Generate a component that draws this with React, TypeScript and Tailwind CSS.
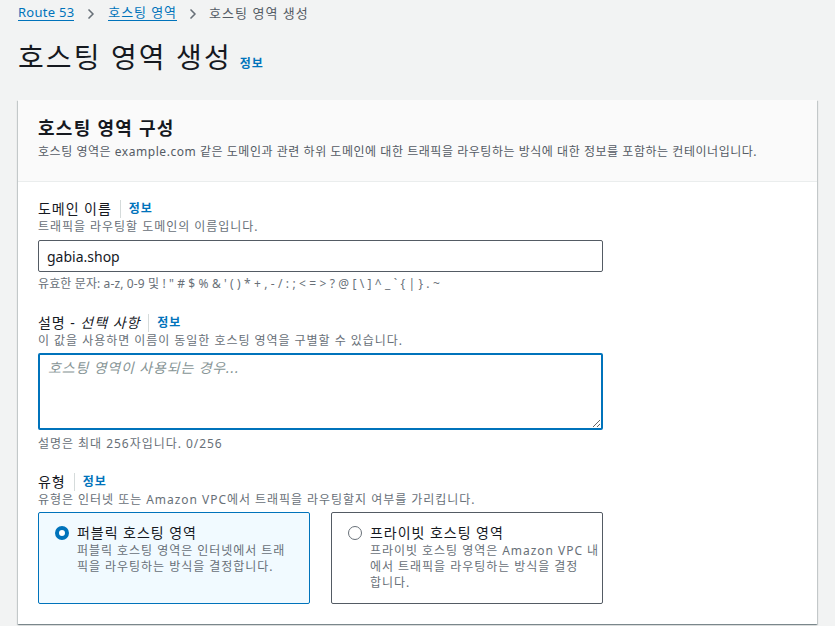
import { ChevronRight } from 'lucide-react';

const font = { fontFamily: '"Noto Sans", "Noto Sans CJK KR", sans-serif' };

function Info() {
    return <a className="text-[12px] font-bold text-[#0073bb] leading-none">정보</a>;
}

function Label({ children }: { children: React.ReactNode }) {
    return (
        <div className="flex items-center h-[18px]">
            <span className="text-[14px] text-[#16191f] leading-none">{children}</span>
            <span className="mx-[8px] h-[18px] w-px bg-[#d5dbdb]" />
            <Info />
        </div>
    );
}

function Tile({ selected, title, lines }: { selected: boolean; title: string; lines: string[] }) {
    return (
        <div
            className={
                selected
                    ? 'w-[272px] h-[92px] rounded-[2px] border border-[#0073bb] bg-[#f1faff] pl-[16px] pt-[10px]'
                    : 'w-[272px] h-[92px] rounded-[2px] border border-[#545b64] bg-white pl-[16px] pt-[10px]'
            }
        >
            <div className="flex gap-[8px]">
                <div className="pt-[3px]">
                    {selected ? (
                        <div className="size-[14px] rounded-full border-[4px] border-[#0073bb] bg-white" />
                    ) : (
                        <div className="size-[14px] rounded-full border-[1.5px] border-[#687078] bg-white" />
                    )}
                </div>
                <div>
                    <div className="text-[14px] leading-[20px] text-[#16191f]">{title}</div>
                    {lines.map((l) => (
                        <div key={l} className="text-[12px] leading-[16px] text-[#687078] whitespace-nowrap">
                            {l}
                        </div>
                    ))}
                </div>
            </div>
        </div>
    );
}

export default function App() {
    return (
        <div className="h-[626px] w-[835px] overflow-hidden bg-[#f2f3f3] tracking-[0.06em]" style={font}>
            {/* breadcrumb */}
            <div className="flex items-center px-[18px] pt-[3px] h-[24px] text-[13px] leading-none">
                <a className="text-[#0073bb] border-b border-[#0073bb] pb-[1px] tracking-[0.02em]">Route 53</a>
                <ChevronRight className="mx-[9px] size-[16px] text-[#687078]" strokeWidth={2.5} />
                <a className="text-[#0073bb] border-b border-[#0073bb] pb-[1px] tracking-[0.07em]">호스팅 영역</a>
                <ChevronRight className="mx-[8px] size-[16px] text-[#687078]" strokeWidth={2.5} />
                <span className="text-[#545b64] tracking-[0.08em]">호스팅 영역 생성</span>
            </div>

            {/* title */}
            <div className="flex items-baseline px-[18px] pt-[15px]">
                <h1 className="text-[28px] leading-[36px] text-[#16191f] tracking-[0.075em]">호스팅 영역 생성</h1>
                <span className="ml-[8px]">
                    <Info />
                </span>
            </div>

            {/* card */}
            <div className="mx-[18px] mt-[25px] bg-white shadow-[0_1px_1px_0_rgba(0,28,36,0.3),1px_1px_1px_0_rgba(0,28,36,0.15),-1px_1px_1px_0_rgba(0,28,36,0.15)]">
                <div className="bg-[#fafafa] border-b border-[#eaeded] px-[20px] pt-[17px] h-[82px]">
                    <h2 className="text-[18px] font-bold leading-[22px] text-[#16191f] tracking-[0.07em]">호스팅 영역 구성</h2>
                    <p className="mt-[5px] text-[12px] leading-[16px] text-[#545b64] whitespace-nowrap tracking-[0.045em]">
                        호스팅 영역은 example.com 같은 도메인과 관련 하위 도메인에 대한 트래픽을 라우팅하는 방식에 대한 정보를 포함하는 컨테이너입니다.
                    </p>
                </div>

                <div className="px-[20px] pt-[18px] pb-[20px] flex flex-col">
                    {/* domain */}
                    <Label>도메인 이름</Label>
                    <div className="mt-[1px] text-[12px] leading-[16px] text-[#687078]">트래픽을 라우팅할 도메인의 이름입니다.</div>
                    <div className="mt-[5px] w-[565px] h-[32px] rounded-[2px] border border-[#545b64] flex items-center px-[8px] text-[14px] text-[#16191f] tracking-normal">
                        gabia.shop
                    </div>
                    <div className="mt-[4px] text-[12px] leading-[16px] text-[#687078] tracking-[0.01em]">
                        유효한 문자: a-z, 0-9 및 ! " # $ % &amp; ' ( ) * + , - / : ; &lt; = &gt; ? @ [ \ ] ^ _ ` {'{'} | {'}'} . ~
                    </div>

                    {/* description */}
                    <div className="mt-[22px]">
                        <Label>
                            설명 - <i>선택 사항</i>
                        </Label>
                    </div>
                    <div className="mt-[1px] text-[12px] leading-[16px] text-[#687078]">이 값을 사용하면 이름이 동일한 호스팅 영역을 구별할 수 있습니다.</div>
                    <textarea
                        className="mt-[4px] w-[565px] h-[77px] rounded-[2px] border-2 border-[#0073bb] outline-none px-[8px] py-[3px] text-[14px] leading-[20px] tracking-[0.06em] placeholder:italic placeholder:text-[#879596]"
                        placeholder="호스팅 영역이 사용되는 경우..."
                        style={font}
                    />
                    <div className="mt-[6px] text-[12px] leading-[16px] text-[#687078]">설명은 최대 256자입니다. 0/256</div>

                    {/* type */}
                    <div className="mt-[21px]">
                        <Label>유형</Label>
                    </div>
                    <div className="mt-[1px] text-[12px] leading-[16px] text-[#687078]">유형은 인터넷 또는 Amazon VPC에서 트래픽을 라우팅할지 여부를 가리킵니다.</div>
                    <div className="mt-[4px] flex gap-[21px]">
                        <Tile
                            selected
                            title="퍼블릭 호스팅 영역"
                            lines={['퍼블릭 호스팅 영역은 인터넷에서 트래', '픽을 라우팅하는 방식을 결정합니다.']}
                        />
                        <Tile
                            selected={false}
                            title="프라이빗 호스팅 영역"
                            lines={['프라이빗 호스팅 영역은 Amazon VPC 내', '에서 트래픽을 라우팅하는 방식을 결정', '합니다.']}
                        />
                    </div>
                </div>
            </div>
        </div>
    );
}
